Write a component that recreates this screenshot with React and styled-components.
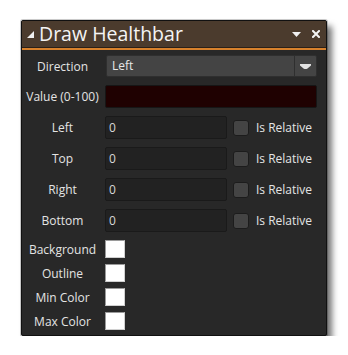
import React from "react";
import styled, { createGlobalStyle } from "styled-components";

const Global = createGlobalStyle`
  html, body { margin: 0; padding: 0; background: #ffffff; }
  body { font-family: "Open Sans", "Noto Sans", sans-serif; }
`;

const Panel = styled.div`
  margin: 20px 0 0 21px;
  width: 306px;
  box-sizing: border-box;
  background: #282828;
  border: 1px solid #111;
  border-radius: 2px;
  box-shadow: 5px 6px 6px rgba(0, 0, 0, 0.55), 0 0 0 1px rgba(0, 0, 0, 0.2);
`;

const Header = styled.div`
  height: 26px;
  background: #4b3b2d;
  border-bottom: 1px solid #2a2018;
  display: flex;
  align-items: center;
  padding: 0 6px 0 5px;
  gap: 5px;
  color: #f2f2f2;
`;

const Title = styled.div`
  flex: 1;
  font-size: 19.5px;
  line-height: 26px;
  color: #f4f4f4;
`;

const Accent = styled.div`
  height: 2px;
  background: #d7812c;
`;

const Body = styled.div`
  display: flex;
  flex-direction: column;
  gap: 8px;
  padding: 5px 9px 5px 0;
`;

const Row = styled.div`
  display: flex;
  align-items: center;
  height: ${(p) => p.$h || 23}px;
`;

const Label = styled.div`
  width: 81px;
  margin-right: 2px;
  text-align: center;
  font-size: 12px;
  color: #e4e4e4;
  white-space: nowrap;
`;

const Select = styled.div`
  margin-left: 1px;
  flex: 1;
  height: 22px;
  box-sizing: border-box;
  display: flex;
  background: #444;
  border: 1px solid #2f2f2f;
  border-radius: 2px;
  font-size: 12px;
  color: #e8e8e8;
`;

const SelectText = styled.div`
  flex: 1;
  padding-left: 5px;
  line-height: 20px;
`;

const SelectButton = styled.div`
  width: 21px;
  border-left: 1px solid #2f2f2f;
  display: flex;
  align-items: center;
  justify-content: center;
`;

const Input = styled.div`
  box-sizing: border-box;
  height: 23px;
  width: ${(p) => (p.$full ? "auto" : "122px")};
  flex: ${(p) => (p.$full ? 1 : "none")};
  background: ${(p) => p.$bg || "#222"};
  border: 1px solid ${(p) => (p.$full ? "#161616" : "#1a1a1a")};
  border-radius: 2px;
  font-size: 12px;
  color: #d8d8d8;
  padding-left: 3px;
  line-height: 21px;
`;

const Check = styled.div`
  width: 16px;
  height: 16px;
  box-sizing: border-box;
  margin-left: 6px;
  background: #444;
  border: 1px solid #1c1c1c;
  border-radius: 3px;
`;

const CheckLabel = styled.div`
  margin-left: 7px;
  font-size: 12px;
  color: #e4e4e4;
`;

const Swatches = styled.div`
  display: flex;
  flex-direction: column;
  gap: 6px;
`;

const Swatch = styled.div`
  width: 20px;
  height: 18px;
  box-sizing: border-box;
  background: ${(p) => p.$color};
  border: 1px solid #9a9a9a;
  border-right-color: #d0d0d0;
  border-bottom-color: #d0d0d0;
`;

const CornerTri = () => (
  <svg width="7" height="7" viewBox="0 0 7 7">
    <polygon points="7,0 7,7 0,7" fill="#f0f0f0" />
  </svg>
);

const Down = () => (
  <svg width="9" height="5" viewBox="0 0 9 5">
    <polygon points="0,0 9,0 4.5,5" fill="#f0f0f0" />
  </svg>
);

const Close = () => (
  <svg width="8" height="8" viewBox="0 0 8 8" style={{ marginLeft: 6 }}>
    <path d="M1 1 L7 7 M7 1 L1 7" stroke="#f4f4f4" strokeWidth="2" strokeLinecap="square" />
  </svg>
);

const SelArrow = () => (
  <svg width="11" height="5" viewBox="0 0 11 5">
    <path d="M0 0 H11 V1.5 L7.5 4.5 Q5.5 5.5 3.5 4.5 L0 1.5 Z" fill="#e2e2e2" />
  </svg>
);

const fields = ["Left", "Top", "Right", "Bottom"];
const colors = ["Background", "Outline", "Min Color", "Max Color"];

export default function App() {
  return (
    <>
      <Global />
      <Panel>
        <Header>
          <CornerTri />
          <Title>Draw Healthbar</Title>
          <Down />
          <Close />
        </Header>
        <Accent />
        <Body>
          <Row $h={22}>
            <Label>Direction</Label>
            <Select>
              <SelectText>Left</SelectText>
              <SelectButton>
                <SelArrow />
              </SelectButton>
            </Select>
          </Row>
          <Row>
            <Label>Value (0-100)</Label>
            <Input $full $bg="#1f0101" />
          </Row>
          {fields.map((f) => (
            <Row key={f}>
              <Label>{f}</Label>
              <Input>0</Input>
              <Check />
              <CheckLabel>Is Relative</CheckLabel>
            </Row>
          ))}
          <Swatches>
            {colors.map((c) => (
              <Row key={c} $h={18}>
                <Label>{c}</Label>
                <Swatch $color="#ffffff" />
              </Row>
            ))}
          </Swatches>
        </Body>
      </Panel>
    </>
  );
}
